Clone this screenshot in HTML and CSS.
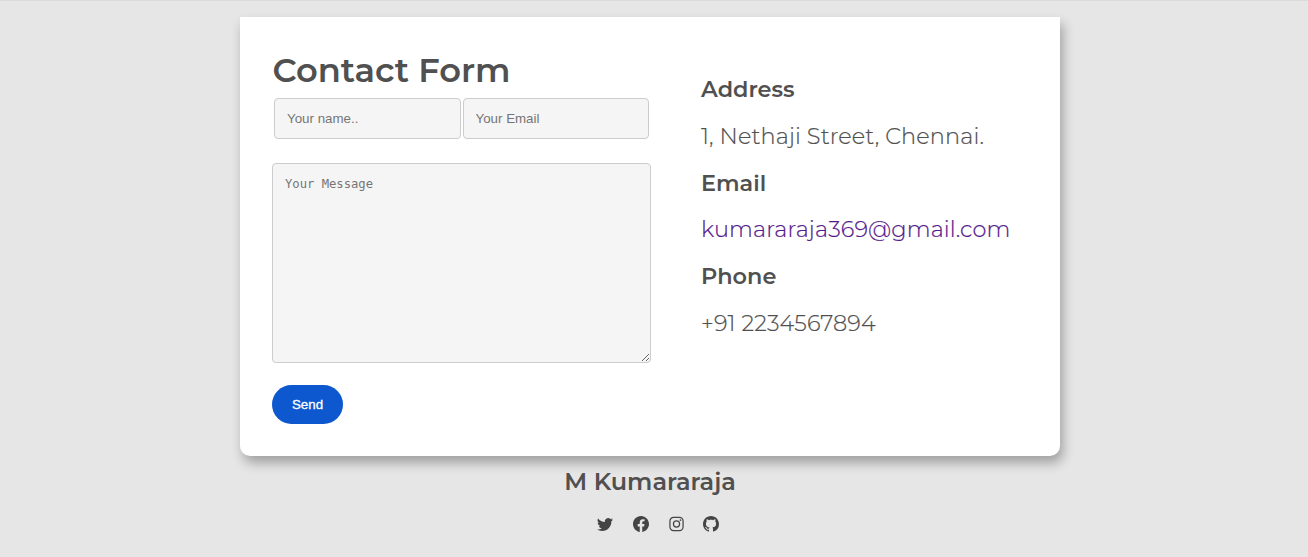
FILE: index.html
```
<!DOCTYPE html>
<html lang="en">
<head>
<meta charset="utf-8">
<title>Contact Form</title>
<link rel="stylesheet" href="styles.css">
</head>
<body>
<main class="card">
  <form class="form">
    <h1 class="title">Contact Form</h1>
    <div class="row">
      <input class="field" type="text" placeholder="Your name..">
      <input class="field" type="email" placeholder="Your Email">
    </div>
    <textarea class="field message" placeholder="Your Message"></textarea>
    <button class="send" type="button">Send</button>
  </form>
  <section class="details">
    <h2 class="label">Address</h2>
    <p class="value">1, Nethaji Street, Chennai.</p>
    <h2 class="label">Email</h2>
    <p class="value"><a class="link" href="#">kumararaja369@gmail.com</a></p>
    <h2 class="label">Phone</h2>
    <p class="value">+91 2234567894</p>
  </section>
</main>
<footer class="footer">
  <h3 class="name">M Kumararaja</h3>
  <div class="social">
    <svg viewBox="0 0 16 16"><path d="M5.026 15c6.038 0 9.341-5.003 9.341-9.334 0-.14 0-.282-.006-.422A6.685 6.685 0 0 0 16 3.542a6.658 6.658 0 0 1-1.889.518 3.301 3.301 0 0 0 1.447-1.817 6.533 6.533 0 0 1-2.087.793A3.286 3.286 0 0 0 7.875 6.03a9.325 9.325 0 0 1-6.767-3.429 3.289 3.289 0 0 0 1.018 4.382A3.323 3.323 0 0 1 .64 6.575v.045a3.288 3.288 0 0 0 2.632 3.218 3.203 3.203 0 0 1-.865.115 3.23 3.23 0 0 1-.614-.057 3.283 3.283 0 0 0 3.067 2.277A6.588 6.588 0 0 1 .78 13.58a6.32 6.32 0 0 1-.78-.045A9.344 9.344 0 0 0 5.026 15z"/></svg>
    <svg viewBox="0 0 16 16"><path d="M16 8.049c0-4.446-3.582-8.05-8-8.05C3.58 0-.002 3.603-.002 8.05c0 4.017 2.926 7.347 6.75 7.951v-5.625h-2.03V8.05H6.75V6.275c0-2.017 1.195-3.131 3.022-3.131.876 0 1.791.157 1.791.157v1.98h-1.009c-.993 0-1.303.621-1.303 1.258v1.51h2.218l-.354 2.326H9.25V16c3.824-.604 6.75-3.934 6.75-7.951z"/></svg>
    <svg class="insta" viewBox="0 0 16 16"><rect x="1" y="1" width="14" height="14" rx="3.8" fill="none" stroke="currentColor" stroke-width="1.3"/><circle cx="8" cy="8" r="3.3" fill="none" stroke="currentColor" stroke-width="1.3"/><circle cx="12.2" cy="3.8" r=".9"/></svg>
    <svg viewBox="0 0 16 16"><path d="M8 0C3.58 0 0 3.58 0 8c0 3.54 2.29 6.53 5.47 7.59.4.07.55-.17.55-.38 0-.19-.01-.82-.01-1.49-2.01.37-2.53-.49-2.69-.94-.09-.23-.48-.94-.82-1.13-.28-.15-.68-.52-.01-.53.63-.01 1.08.58 1.23.82.72 1.21 1.87.87 2.33.66.07-.52.28-.87.51-1.07-1.78-.2-3.64-.89-3.64-3.95 0-.87.31-1.59.82-2.15-.08-.2-.36-1.02.08-2.12 0 0 .67-.21 2.2.82.64-.18 1.32-.27 2-.27s1.36.09 2 .27c1.53-1.04 2.2-.82 2.2-.82.44 1.1.16 1.92.08 2.12.51.56.82 1.27.82 2.15 0 3.07-1.87 3.75-3.65 3.95.29.25.54.73.54 1.48 0 1.07-.01 1.93-.01 2.2 0 .21.15.46.55.38A8.01 8.01 0 0 0 16 8c0-4.42-3.58-8-8-8z"/></svg>
  </div>
</footer>
</body>
</html>
```
FILE: styles.css
```
* { box-sizing: border-box; }
body {
  margin: 0;
  height: 557px;
  overflow: hidden;
  background: #e6e6e6;
  border-top: 1px solid #dadada;
  color: #505050;
  font-family: Montserrat, Inter, sans-serif;
}
.card {
  display: flex;
  width: 820px;
  height: 439px;
  margin: 16px 0 0 240px;
  padding: 32px;
  background: #fff;
  border-radius: 0 0 10px 10px;
  box-shadow: 3px 7px 12px rgba(0, 0, 0, .3);
}
.form { width: 379px; }
.title {
  margin: 0 0 8px;
  height: 41px;
  padding-left: .5px;
  font-size: 33.7px;
  line-height: 41px;
  font-weight: 600;
}
.row { display: flex; gap: 2px; padding: 0 2px; margin-bottom: 24px; }
.field {
  display: block;
  width: 187px;
  height: 41px;
  min-width: 0;
  flex: 1;
  padding: 12px;
  border: 1px solid #ccc;
  border-radius: 4px;
  background: #f5f5f5;
  font: 13.333px "Liberation Sans", Arial, sans-serif;
}
.field::placeholder { color: #757575; }
.message {
  width: 379px;
  height: 200px;
  margin-bottom: 22px;
  padding-top: 13px;
  resize: both;
  font: 12.2px "DejaVu Sans Mono", monospace;
}
.send {
  display: block;
  width: 71px;
  height: 39px;
  padding: 0;
  border: 0;
  border-radius: 20px;
  background: #0d58cf;
  color: #fff;
  font: 13.333px "Liberation Sans", Arial, sans-serif;
  -webkit-text-stroke: .3px #fff;
}
.details { margin-left: 50px; padding-top: 27px; }
.label, .value { margin: 0 0 19.8px; height: 27px; font-size: 22.4px; line-height: 27px; }
.label { font-weight: 600; }
.value { font-weight: 300; letter-spacing: .14px; -webkit-text-stroke: .2px; }
.link { color: #551a8b; text-decoration: none; }
.footer { width: 820px; margin-left: 240px; }
.name {
  margin: 11px 0 0;
  text-align: center;
  font-size: 24px;
  line-height: 30px;
  font-weight: 600;
}
.social { display: flex; gap: 20px; margin: 19px 0 0 357px; color: #444; }
.social svg { display: block; width: 16px; height: 16px; fill: currentColor; }
.social .insta { width: 15px; margin-right: -.6px; }
```
